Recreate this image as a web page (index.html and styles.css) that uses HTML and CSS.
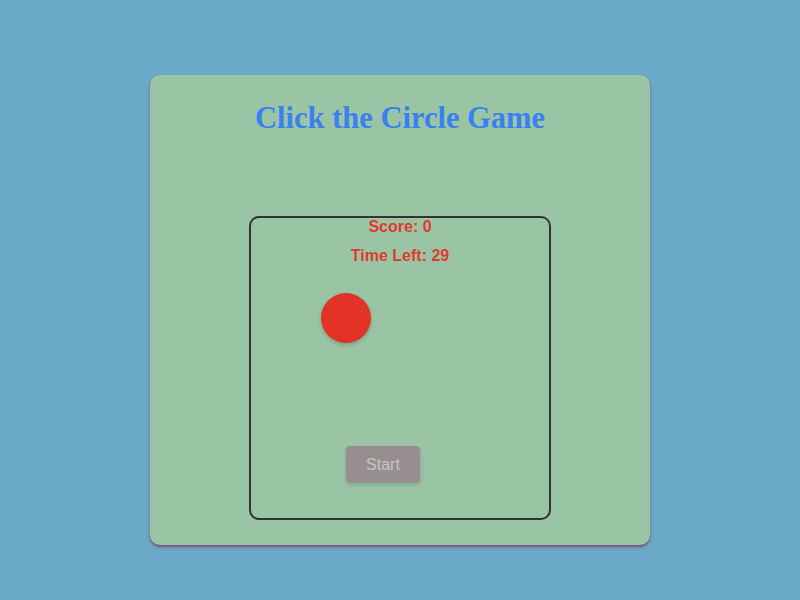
FILE: index.html
```html
<!DOCTYPE html>
<html>
<head>
<meta charset="utf-8">
<link rel="stylesheet" href="styles.css">
</head>
<body>
<div class="card">
  <h1 class="title">Click the Circle Game</h1>
  <div class="game">
    <div class="score">Score: 0</div>
    <div class="time">Time Left: 29</div>
    <div class="circle"></div>
    <button class="start">Start</button>
  </div>
</div>
</body>
</html>
```
FILE: styles.css
```css
html, body {
  margin: 0;
  padding: 0;
}
body {
  background: #6aaac8;
  width: 800px;
  height: 600px;
  font-family: "Liberation Sans", Arial, sans-serif;
}
.card {
  position: relative;
  top: 75px;
  margin: 0 auto;
  width: 500px;
  height: 470px;
  box-sizing: border-box;
  background: #9ac5a5;
  border-radius: 10px;
  box-shadow: 0 2px 3px rgba(130, 60, 95, 0.85);
  padding-top: 25px;
}
.title {
  margin: 0;
  text-align: center;
  font-family: "Liberation Serif", "Times New Roman", serif;
  font-weight: bold;
  font-size: 30.5px;
  line-height: 36px;
  color: #3b80f0;
}
.game {
  position: relative;
  width: 302px;
  height: 304px;
  box-sizing: border-box;
  margin: 80px auto 0;
  border: 2px solid #333;
  border-radius: 10px;
  text-align: center;
  color: #e03a30;
  font-weight: bold;
  font-size: 16px;
}
.score {
  line-height: 18px;
  margin-top: 0;
}
.time {
  line-height: 18px;
  margin-top: 11px;
}
.circle {
  position: absolute;
  left: 70px;
  top: 75px;
  width: 50px;
  height: 50px;
  border-radius: 50%;
  background: #e33326;
  box-shadow: 0 2px 4px rgba(0, 0, 0, 0.2);
}
.start {
  position: absolute;
  left: 95px;
  top: 228px;
  width: 74px;
  height: 37px;
  border: none;
  border-radius: 4px;
  background: #978f8f;
  color: #c6c6c6;
  font-family: "Liberation Sans", Arial, sans-serif;
  font-size: 16px;
  box-shadow: 0 2px 4px rgba(0, 0, 0, 0.15);
}
```
